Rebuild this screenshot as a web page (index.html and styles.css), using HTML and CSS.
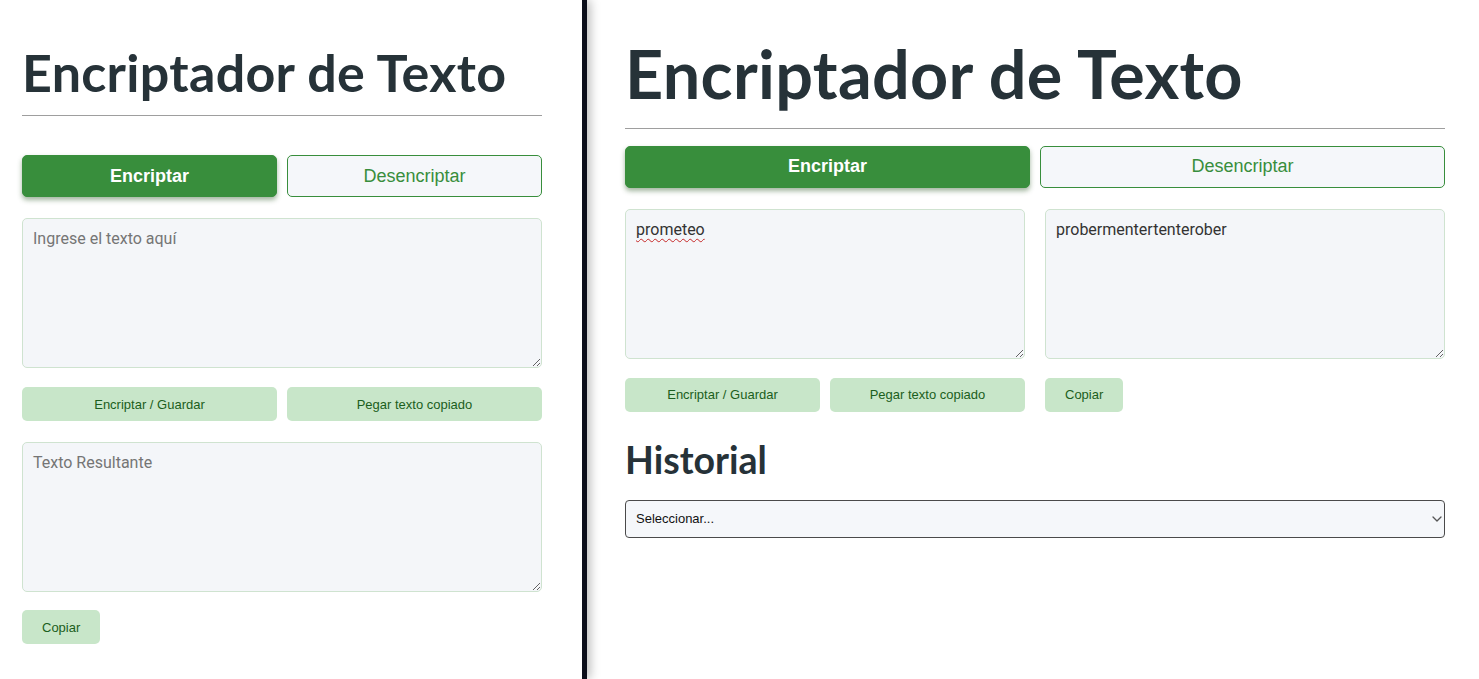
FILE: index.html
```html
<!DOCTYPE html>
<html lang="es">
<head>
<meta charset="utf-8">
<title>Encriptador de Texto</title>
<link rel="stylesheet" href="styles.css">
</head>
<body>
<div class="page">
  <section class="panel panel-mobile">
    <h1 class="title title-sm">Encriptador de Texto</h1>
    <hr class="rule rule-sm">
    <div class="modes modes-sm">
      <button class="mode mode-active">Encriptar</button>
      <button class="mode">Desencriptar</button>
    </div>
    <textarea class="box box-first" placeholder="Ingrese el texto aquí"></textarea>
    <div class="actions">
      <button class="act">Encriptar / Guardar</button>
      <button class="act">Pegar texto copiado</button>
    </div>
    <textarea class="box box-second" placeholder="Texto Resultante"></textarea>
    <div class="actions-single">
      <button class="act act-copy">Copiar</button>
    </div>
  </section>

  <section class="panel panel-desktop">
    <div class="wrap">
      <h1 class="title title-lg">Encriptador de Texto</h1>
      <hr class="rule rule-lg">
      <div class="modes modes-lg">
        <button class="mode mode-active">Encriptar</button>
        <button class="mode">Desencriptar</button>
      </div>
      <div class="cols">
        <div class="col">
          <div class="box box-div"><span class="typo">prometeo</span></div>
          <div class="actions">
            <button class="act">Encriptar / Guardar</button>
            <button class="act">Pegar texto copiado</button>
          </div>
        </div>
        <div class="col">
          <textarea class="box box-filled">probermentertenterober</textarea>
          <div class="actions-single">
            <button class="act act-copy">Copiar</button>
          </div>
        </div>
      </div>
      <h2 class="history">Historial</h2>
      <div class="picker-wrap">
        <select class="picker">
          <option>Seleccionar...</option>
        </select>
        <svg class="chevron" width="10" height="6" viewBox="0 0 10 6" aria-hidden="true">
          <path d="M1 1 L5 5 L9 1" fill="none" stroke="#555" stroke-width="1.3" stroke-linecap="round" stroke-linejoin="round"/>
        </svg>
      </div>
    </div>
  </section>
</div>
</body>
</html>
```

FILE: styles.css
```css
* { box-sizing: border-box; }

html, body {
  margin: 0;
  padding: 0;
  background: #ffffff;
  height: 100%;
}

body {
  font-family: "Liberation Sans", Arial, sans-serif;
  color: #263238;
  overflow: hidden;
}

.page {
  display: flex;
  height: 679px;
}

.panel-mobile {
  width: 587px;
  flex: none;
  padding: 0 40px 0 22px;
  border-right: 5px solid #0b0e1a;
  box-shadow: 3px 0 10px rgba(0, 0, 0, 0.28);
  position: relative;
  z-index: 1;
  background: #fff;
}

.panel-desktop {
  flex: 1;
  padding: 0 0 0 38px;
}

.wrap {
  width: 820px;
}

.title {
  font-family: "Lato", "Noto Sans", sans-serif;
  font-weight: 700;
  color: #263238;
  margin: 0;
  line-height: 1.2;
  letter-spacing: 0.3px;
}

.title-sm {
  font-size: 52px;
  padding-top: 41px;
}

.title-lg {
  font-size: 66.5px;
  padding-top: 34px;
}

.rule {
  border: 0;
  border-top: 1px solid #9e9e9e;
  margin: 0;
}

.rule-sm { margin-top: 12px; }
.rule-lg { margin-top: 14px; }

.modes {
  display: grid;
  grid-template-columns: 1fr 1fr;
  gap: 10px;
}

.modes-sm { margin-top: 39px; }
.modes-lg { margin-top: 17px; }

.mode {
  height: 42px;
  border-radius: 5px;
  border: 1px solid #388e3c;
  background: #f5f7fa;
  color: #388e3c;
  font-family: "Liberation Sans", Arial, sans-serif;
  font-size: 18px;
  cursor: pointer;
}

.mode-active {
  background: #388e3c;
  color: #ffffff;
  font-weight: 700;
  box-shadow: 0 3px 5px rgba(46, 90, 40, 0.45);
}

.box {
  display: block;
  width: 100%;
  height: 150px;
  margin: 21px 0 0;
  padding: 10px;
  border: 1px solid #cfe3d0;
  border-radius: 5px;
  background: #f4f6f9;
  font-family: "Roboto", sans-serif;
  font-size: 16px;
  color: #333;
  resize: vertical;
  outline: none;
}

.box::placeholder {
  color: #757575;
}

.box-div {
  overflow: auto;
  line-height: 1.2;
}

.typo {
  text-decoration: underline wavy #c62828;
  text-decoration-thickness: 1px;
  text-underline-offset: 3px;
}

.actions {
  display: grid;
  grid-template-columns: 1fr 1fr;
  gap: 10px;
  margin-top: 19px;
}

.actions-single {
  margin-top: 19px;
}

.act {
  height: 34px;
  border: 0;
  border-radius: 5px;
  background: #c8e6c9;
  color: #1b5e20;
  font-family: "Liberation Sans", Arial, sans-serif;
  font-size: 13px;
  cursor: pointer;
}

.act-copy {
  padding: 0 20px;
}

.panel-mobile .actions-single { margin-top: 18px; }

.cols {
  display: grid;
  grid-template-columns: 1fr 1fr;
  gap: 20px;
}

.history {
  font-family: "Lato", "Noto Sans", sans-serif;
  font-weight: 700;
  font-size: 37.5px;
  line-height: 1.2;
  margin: 25px 0 0;
  color: #263238;
}

.picker-wrap {
  position: relative;
  margin-top: 18px;
}

.picker {
  display: block;
  width: 100%;
  height: 38px;
  padding: 0 10px;
  border: 1px solid #4a4a4a;
  border-radius: 4px;
  background: #f5f7fa;
  font-family: "Liberation Sans", Arial, sans-serif;
  font-size: 13px;
  color: #111;
  appearance: none;
  -webkit-appearance: none;
}

.chevron {
  position: absolute;
  right: 3px;
  top: 16px;
  pointer-events: none;
}
```
